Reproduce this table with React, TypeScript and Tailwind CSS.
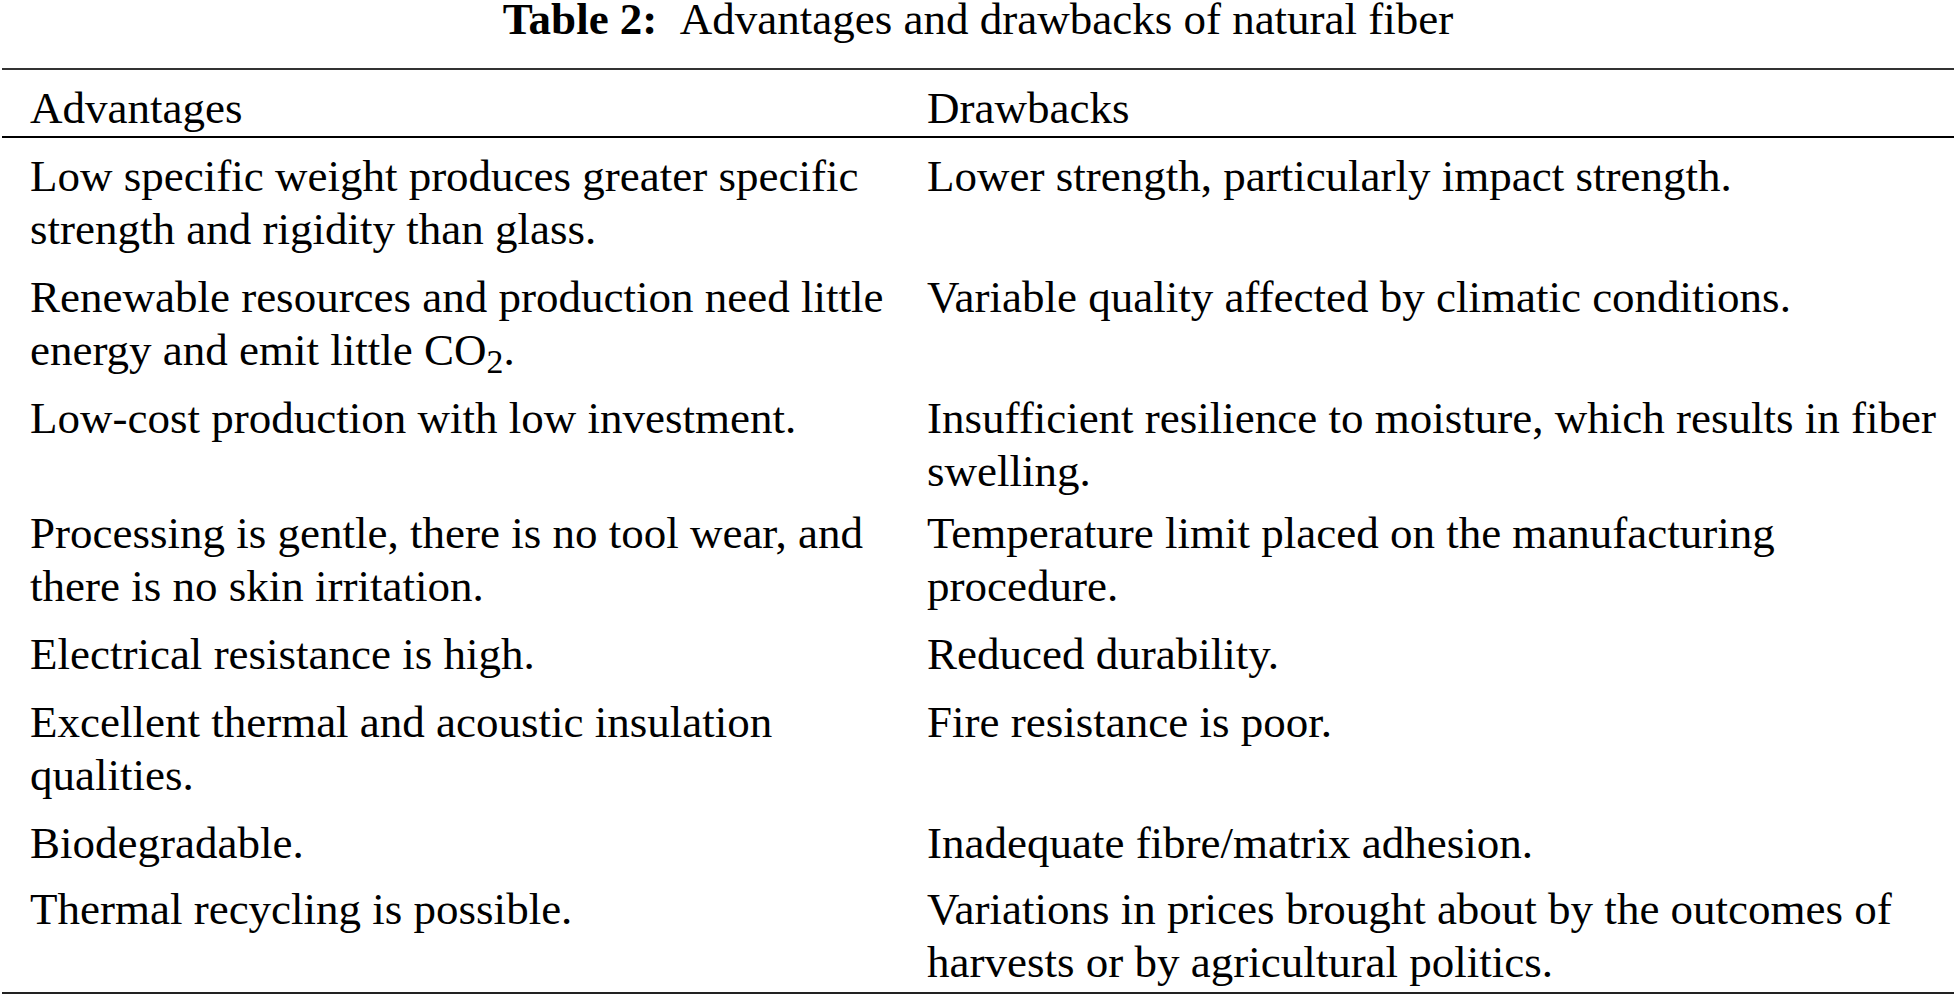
import React from "react";

type Row = {
  advantage: React.ReactNode;
  drawback: React.ReactNode;
  // top padding of the row, the source table is not perfectly regular
  pad?: string;
};

const rows: Row[] = [
  {
    advantage:
      "Low specific weight produces greater specific strength and rigidity than glass.",
    drawback: "Lower strength, particularly impact strength.",
  },
  {
    advantage: (
      <>
        Renewable resources and production need little energy and emit little
        CO<sub>2</sub>.
      </>
    ),
    drawback: "Variable quality affected by climatic conditions.",
  },
  {
    advantage: "Low-cost production with low investment.",
    drawback:
      "Insufficient resilience to moisture, which results in fiber swelling.",
  },
  {
    advantage:
      "Processing is gentle, there is no tool wear, and there is no skin irritation.",
    drawback: "Temperature limit placed on the manufacturing procedure.",
    pad: "pt-[6px]",
  },
  {
    advantage: "Electrical resistance is high.",
    drawback: "Reduced durability.",
  },
  {
    advantage: "Excellent thermal and acoustic insulation qualities.",
    drawback: "Fire resistance is poor.",
  },
  {
    advantage: "Biodegradable.",
    drawback: "Inadequate fibre/matrix adhesion.",
  },
  {
    advantage: "Thermal recycling is possible.",
    drawback:
      "Variations in prices brought about by the outcomes of harvests or by agricultural politics.",
    pad: "pt-[10px]",
  },
];

const App: React.FC = () => {
  return (
    <div
      className="min-h-[997px] w-full bg-white text-black text-[45px] leading-[53px]"
      style={{ fontFamily: '"Liberation Serif", "Times New Roman", serif' }}
    >
      <div className="text-center leading-[38px]">
        <span className="font-bold">Table 2:</span>
        {"\u2002"}Advantages and drawbacks of natural fiber
      </div>

      <div className="mx-[2px] mt-[30px] border-t-2 border-b-2 border-t-[#333] border-b-[#222]">
        <div className="grid grid-cols-[925px_1fr] border-b-2 border-black">
          <div className="pl-[28px] pr-[20px] pt-[12px] pb-[1px]">Advantages</div>
          <div className="pt-[12px] pb-[1px]">Drawbacks</div>
        </div>

        {rows.map((row, idx) => (
          <div
            key={idx}
            className={`grid grid-cols-[925px_1fr] pb-[3px] ${row.pad ?? "pt-[12px]"}`}
          >
            <div className="pl-[28px] pr-[20px]">{row.advantage}</div>
            <div>{row.drawback}</div>
          </div>
        ))}
      </div>
    </div>
  );
};

export default App;
